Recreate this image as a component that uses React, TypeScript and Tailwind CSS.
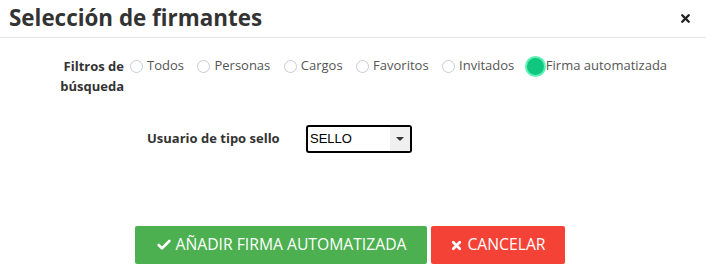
import { Check, X } from "lucide-react";

const filtros = ["Todos", "Personas", "Cargos", "Favoritos", "Invitados"];

export default function App() {
  return (
    <div className="w-[706px] h-[278px] bg-white text-[#333] font-['Open_Sans',sans-serif] overflow-hidden">
      <div className="flex items-center justify-between h-[38px] border-b border-[#e5e5e5] pl-[9px] pr-[14px]">
        <h1 className="text-[22.4px] font-bold leading-none text-[#333]">Selección de firmantes</h1>
        <X className="w-[13px] h-[13px] text-[#222]" strokeWidth={4.5} />
      </div>

      <div className="flex items-start pt-[18px] text-[13px]">
        <div className="w-[69px] ml-[55px] text-right font-bold leading-[20px]">Filtros de búsqueda</div>
        <div className="flex items-center h-[20px] ml-[6px] text-[#555]">
          {filtros.map((f) => (
            <label key={f} className="flex items-center mr-[13.5px]">
              <span className="w-[13px] h-[13px] rounded-full border border-[#c8ccd4] bg-white mr-[4px]" />
              {f}
            </label>
          ))}
          <label className="flex items-center">
            <span className="w-[17px] h-[17px] rounded-full bg-[#0fc77f] ring-2 ring-[#5ef0b6] mr-[2px] -ml-[1px]" />
            Firma automatizada
          </label>
        </div>
      </div>

      <div className="flex items-center mt-[29px] text-[13px]">
        <div className="ml-[147px] w-[135px] font-bold">Usuario de tipo sello</div>
        <div className="ml-[24px] flex items-center w-[106px] h-[28px] border-2 border-black rounded-[3px] bg-white">
          <span className="flex-1 pl-[2px] font-['Liberation_Sans',sans-serif] text-[13px] text-black">SELLO</span>
          <span className="w-[20px] h-full flex items-center justify-center bg-[#f0f0f0]">
            <span className="w-0 h-0 border-l-[4px] border-r-[4px] border-t-[4px] border-l-transparent border-r-transparent border-t-[#333]" />
          </span>
        </div>
      </div>

      <div className="flex mt-[73px] pl-[135px] gap-[4px] text-[15.7px] text-white">
        <button className="flex items-center justify-center w-[292px] h-[38px] bg-[#4caf50] rounded-[2px]">
          <Check className="w-[16px] h-[16px] mr-[4px]" strokeWidth={4} />
          AÑADIR FIRMA AUTOMATIZADA
        </button>
        <button className="flex items-center justify-center w-[134px] h-[38px] bg-[#f44336] rounded-[2px]">
          <X className="w-[13px] h-[13px] mr-[4px]" strokeWidth={5} />
          CANCELAR
        </button>
      </div>
    </div>
  );
}
